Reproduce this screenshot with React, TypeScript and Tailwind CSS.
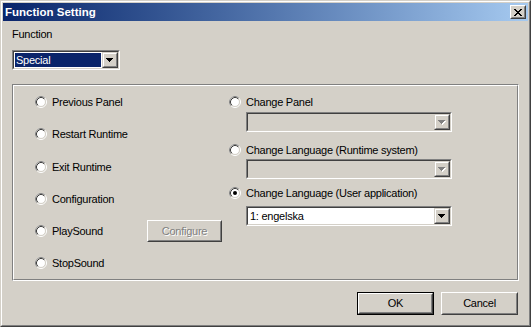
import React from "react";

function Radio({ checked = false }: { checked?: boolean }) {
  return (
    <svg width="12" height="12" viewBox="0 0 12 12" className="shrink-0">
      <circle cx="6" cy="6" r="5.5" fill="none" stroke="#ffffff" />
      <path d="M2.11 9.89 A5.5 5.5 0 0 1 9.89 2.11" fill="none" stroke="#808080" />
      <circle cx="6" cy="6" r="4.5" fill="#ffffff" stroke="#d4d0c8" />
      <path d="M2.82 9.18 A4.5 4.5 0 0 1 9.18 2.82" fill="none" stroke="#404040" />
      {checked && <circle cx="6" cy="6" r="2" fill="#000000" />}
    </svg>
  );
}

function RadioItem({ label, checked = false }: { label: string; checked?: boolean }) {
  return (
    <div className="flex h-[14px] items-center gap-[5px]">
      <Radio checked={checked} />
      <span className="leading-[13px] whitespace-nowrap">{label}</span>
    </div>
  );
}

function ArrowButton({ disabled = false }: { disabled?: boolean }) {
  return (
    <div className="h-full w-[16px] shrink-0 border border-t-[#d4d0c8] border-l-[#d4d0c8] border-b-[#404040] border-r-[#404040] bg-[#d4d0c8]">
      <div className="flex h-full items-center justify-center border border-t-white border-l-white border-b-[#808080] border-r-[#808080]">
        <svg width="8" height="5" viewBox="0 0 8 5" shapeRendering="crispEdges">
          {disabled ? (
            <>
              <polygon points="1,1 8,1 4.5,5" fill="#ffffff" />
              <polygon points="0,0 7,0 3.5,4" fill="#808080" />
            </>
          ) : (
            <polygon points="0,0 7,0 3.5,4" fill="#000000" />
          )}
        </svg>
      </div>
    </div>
  );
}

function Combo({ text, disabled = false }: { text?: string; disabled?: boolean }) {
  return (
    <div className="h-[20px] w-[206px] border border-t-[#808080] border-l-[#808080] border-b-white border-r-white">
      <div
        className={
          disabled
            ? "flex h-full border border-t-[#404040] border-l-[#404040] border-b-[#d4d0c8] border-r-[#d4d0c8] bg-[#d4d0c8]"
            : "flex h-full border border-t-[#404040] border-l-[#404040] border-b-[#d4d0c8] border-r-[#d4d0c8] bg-white"
        }
      >
        <div className="flex flex-1 items-center pl-[2px] leading-[13px]">{text}</div>
        <ArrowButton disabled={disabled} />
      </div>
    </div>
  );
}

export default function App() {
  return (
    <div className="h-[327px] w-[531px] border border-t-[#d4d0c8] border-l-[#d4d0c8] border-b-[#404040] border-r-[#404040] bg-[#d4d0c8] font-['Liberation_Sans',Arial,sans-serif] text-[11px] tracking-[-0.25px] text-black">
      <div className="flex h-full flex-col border border-t-white border-l-white border-b-[#808080] border-r-[#808080] p-px">
        {/* Title bar */}
        <div className="flex h-[18px] shrink-0 items-center justify-between bg-gradient-to-r from-[#0a246a] to-[#a6caf0] pl-[2px] pr-[2px]">
          <span className="text-[11.5px] font-bold leading-[14px] tracking-normal text-white">Function Setting</span>
          <div className="h-[14px] w-[16px] border border-t-white border-l-white border-b-[#404040] border-r-[#404040] bg-[#d4d0c8]">
            <div className="flex h-full items-center justify-center border border-t-[#d4d0c8] border-l-[#d4d0c8] border-b-[#808080] border-r-[#808080]">
              <svg width="8" height="7" viewBox="0 0 8 7" shapeRendering="crispEdges">
                <path d="M0 0h2v1h-2zM6 0h2v1h-2zM1 1h2v1h-2zM5 1h2v1h-2zM2 2h4v1h-4zM3 3h2v1h-2zM2 4h4v1h-4zM1 5h2v1h-2zM5 5h2v1h-2zM0 6h2v1h-2zM6 6h2v1h-2z" fill="#000" />
              </svg>
            </div>
          </div>
        </div>

        {/* Body */}
        <div className="flex flex-1 flex-col">
          <div className="ml-[9px] mt-[7px] leading-[13px]">Function</div>

          {/* Function combo */}
          <div className="ml-[9px] mt-[9px] h-[20px] w-[108px] border border-t-[#808080] border-l-[#808080] border-b-white border-r-white">
            <div className="flex h-full border border-t-[#404040] border-l-[#404040] border-b-[#d4d0c8] border-r-[#d4d0c8] bg-white">
              <div className="flex flex-1 items-center border border-white bg-[#0a246a] pl-px leading-[13px] text-white">
                Special
              </div>
              <ArrowButton />
            </div>
          </div>

          {/* Group box */}
          <div className="ml-[9px] mt-[14px] h-[197px] w-[507px] border border-t-[#808080] border-l-[#808080] border-b-white border-r-white">
            <div className="flex h-full border border-t-white border-l-white border-b-[#808080] border-r-[#808080]">
              {/* Left column */}
              <div className="flex w-[215px] flex-col pl-[21px] pt-[5px]">
                <div className="flex h-[22px] items-center"><RadioItem label="Previous Panel" /></div>
                <div className="mt-[10px] flex h-[22px] items-center"><RadioItem label="Restart Runtime" /></div>
                <div className="mt-[11px] flex h-[22px] items-center"><RadioItem label="Exit Runtime" /></div>
                <div className="mt-[10px] flex h-[22px] items-center"><RadioItem label="Configuration" /></div>
                <div className="mt-[10px] flex h-[22px] items-center">
                  <div className="w-[112px]"><RadioItem label="PlaySound" /></div>
                  <div className="h-[22px] w-[75px] border border-t-white border-l-white border-b-[#404040] border-r-[#404040]">
                    <div className="flex h-full items-center justify-center border border-t-[#d4d0c8] border-l-[#d4d0c8] border-b-[#808080] border-r-[#808080] leading-[13px] text-[#808080] [text-shadow:1px_1px_0_#ffffff]">
                      Configure
                    </div>
                  </div>
                </div>
                <div className="mt-[10px] flex h-[22px] items-center"><RadioItem label="StopSound" /></div>
              </div>

              {/* Right column */}
              <div className="flex flex-col pt-[9px]">
                <RadioItem label="Change Panel" />
                <div className="ml-[17px] mt-[3px]"><Combo disabled /></div>
                <div className="mt-[11px]"><RadioItem label="Change Language (Runtime system)" /></div>
                <div className="ml-[17px] mt-[2px]"><Combo disabled /></div>
                <div className="mt-[7px]"><RadioItem label="Change Language (User application)" checked /></div>
                <div className="ml-[17px] mt-[6px]"><Combo text="1: engelska" /></div>
              </div>
            </div>
          </div>

          {/* Buttons */}
          <div className="mr-[10px] mt-[11px] flex justify-end gap-[7px]">
            <div className="h-[23px] w-[77px] border border-black">
              <div className="h-full border border-t-white border-l-white border-b-[#404040] border-r-[#404040]">
                <div className="flex h-full items-center justify-center border border-t-[#d4d0c8] border-l-[#d4d0c8] border-b-[#808080] border-r-[#808080] leading-[13px]">
                  OK
                </div>
              </div>
            </div>
            <div className="h-[23px] w-[77px] border border-t-white border-l-white border-b-[#404040] border-r-[#404040]">
              <div className="flex h-full items-center justify-center border border-t-[#d4d0c8] border-l-[#d4d0c8] border-b-[#808080] border-r-[#808080] leading-[13px]">
                Cancel
              </div>
            </div>
          </div>
        </div>
      </div>
    </div>
  );
}
